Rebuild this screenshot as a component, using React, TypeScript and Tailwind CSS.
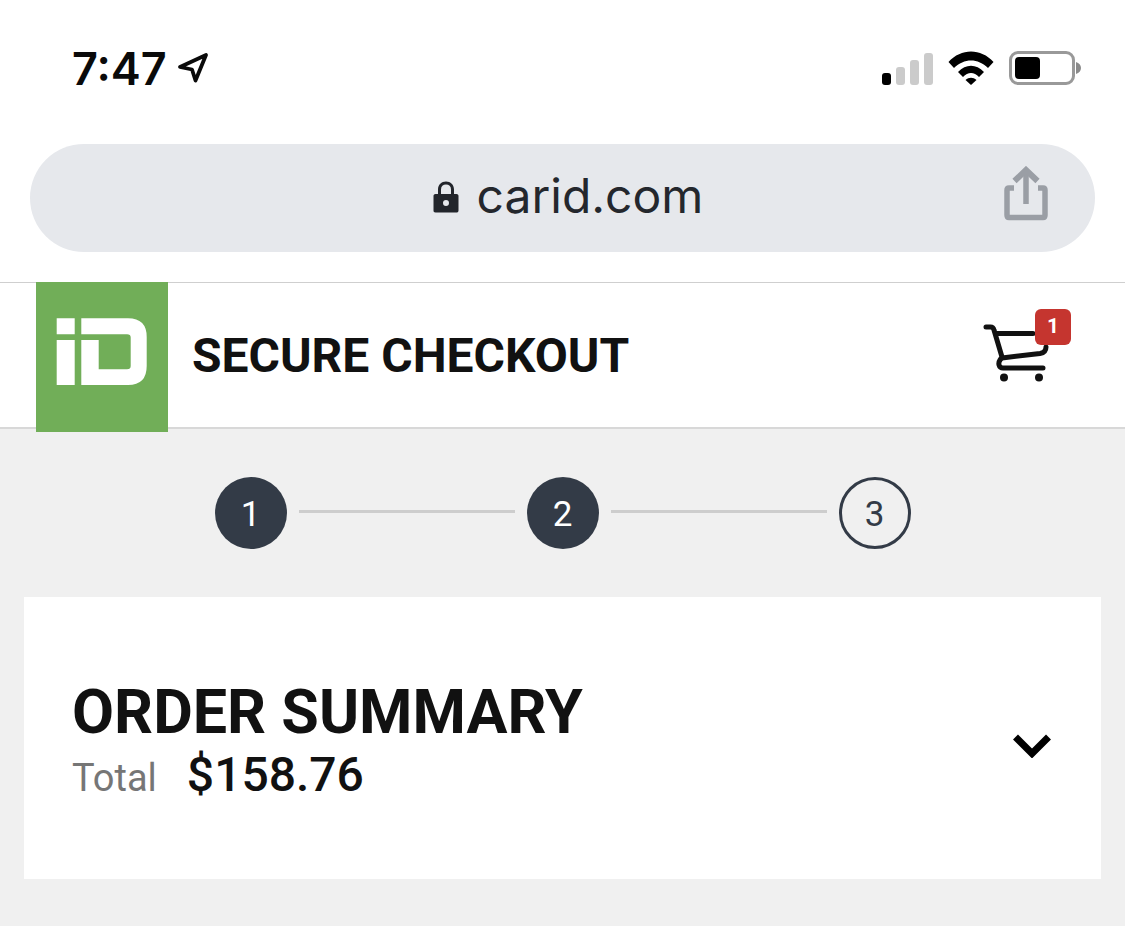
import React from "react";

const roboto = "font-['Roboto',sans-serif]";
const inter = "font-['Inter',sans-serif]";

function Step({ n, filled }: { n: number; filled?: boolean }) {
  return (
    <div
      className={`w-[72px] h-[72px] rounded-full flex items-center justify-center pt-[4px] text-[35px] font-normal ${roboto} ${
        filled ? "bg-[#333b47] text-white" : "border-[3px] border-[#333b47] text-[#333b47]"
      }`}
    >
      {n}
    </div>
  );
}

export default function App() {
  return (
    <div className="w-[1125px] h-[926px] bg-[#f0f0f0] overflow-hidden flex flex-col">
      {/* Status bar */}
      <div className="bg-white h-[144px] shrink-0 flex justify-between items-start pl-[72px] pr-[44px] pt-[43px]">
        <div className="flex items-center">
          <span className={`text-[45px] leading-[52px] font-semibold text-[#0a0a0a] ${inter}`}>7:47</span>
          <svg width="32" height="32" viewBox="0 0 32 32" className="ml-[10px] mt-[-2px]" fill="none" stroke="#0a0a0a" strokeWidth="3.800" strokeLinejoin="round">
            <path d="M3 15 L29 3 L18.500 28.500 L15 17.500 Z" />
          </svg>
        </div>
        <div className="flex items-center gap-[15px] mt-[8px]">
          <div className="flex items-end gap-[5px] h-[34px]">
            <div className="w-[9px] h-[12px] rounded-[3px] bg-black" />
            <div className="w-[9px] h-[18px] rounded-[3px] bg-[#cbcbcb]" />
            <div className="w-[9px] h-[25px] rounded-[3px] bg-[#cbcbcb]" />
            <div className="w-[9px] h-[32px] rounded-[3px] bg-[#cbcbcb]" />
          </div>
          <svg width="46" height="34" viewBox="0 0 46 34" fill="#000">
            <path d="M0.500 11 C13 -3 33 -3 45.500 11 L40 17 C30 7 16 7 6 17 Z" />
            <path d="M10 21 C18 12.500 28 12.500 36 21 L31 26 C26 20.500 20 20.500 15 26 Z" />
            <path d="M17.500 29 C21 26 25 26 28.500 29 L23 34 Z" />
          </svg>
          <div className="flex items-center">
            <div className="w-[66px] h-[34px] rounded-[9px] border-[3px] border-[#999] p-[3px]">
              <div className="w-[25px] h-full rounded-[4px] bg-black" />
            </div>
            <svg width="5" height="12" viewBox="0 0 5 12" className="ml-[1px]" fill="#8a8a8a">
              <path d="M0 0 C3 1 5 3 5 6 C5 9 3 11 0 12 Z" />
            </svg>
          </div>
        </div>
      </div>

      {/* URL bar */}
      <div className="bg-white h-[138px] shrink-0 px-[30px]">
        <div className="relative h-[108px] rounded-[54px] bg-[#e6e8ec] flex items-center justify-center pl-[11px]">
          <svg width="26" height="32" viewBox="0 0 26 32" className="mr-[18px] mt-[-3px]">
            <path fillRule="evenodd" fill="#22252b" d="M5 13 V8.500 C5 3.500 8.500 0.500 13 0.500 C17.500 0.500 21 3.500 21 8.500 V13 H23.500 C25 13 25.500 14 25.500 15 V29.500 C25.500 31 24.500 31.500 23.500 31.500 H2.500 C1 31.500 0.500 30.500 0.500 29.500 V15 C0.500 14 1 13 2.500 13 Z M8 13 H18 V8.500 C18 5.200 16 3.500 13 3.500 C10 3.500 8 5.200 8 8.500 Z M13 19 A3 3 0 1 0 13 25 A3 3 0 1 0 13 19 Z" />
          </svg>
          <span className={`text-[48px] leading-[56px] mt-[-5px] text-[#24272d] ${inter}`}>carid.com</span>
          <svg width="44" height="56" viewBox="0 0 44 56" className="absolute right-[47px] top-[22px]" fill="none" stroke="#9a9ea5" strokeWidth="5.500">
            <path d="M10 22 H5 C3 22 3 23 3 24 V49 C3 51 4 51.500 5 51.500 H39 C40 51.500 41 51 41 49 V24 C41 23 41 22 39 22 H34" strokeLinejoin="round" />
            <path d="M22 38 V4" />
            <path d="M10.500 15 L22 4 L33.500 15" strokeWidth="6" />
          </svg>
        </div>
      </div>

      {/* Header */}
      <div className="bg-white h-[147px] shrink-0 border-t border-[#cfcfcf] border-b-2 border-b-[#d8d8d8] flex items-start">
        <svg width="132" height="150" viewBox="0 0 132 150" className="ml-[36px] mt-[-1px] mb-[-6px] relative shrink-0">
          <rect width="132" height="150" fill="#71ae58" />
          <path fill="#fff" d="M20.700 36.300 H38.700 V52.300 H20.700 Z M20.700 58 H38.700 V103 H20.700 Z" />
          <path fill="#fff" d="M45.300 36.300 H92 Q110.700 36.300 110.700 55 V84 Q110.700 103 92 103 H45.300 V58 H62.700 V87.300 H91 Q94.700 87.300 94.700 84 V55.500 Q94.700 52.300 91 52.300 H45.300 Z" />
        </svg>
        <div className={`ml-[24px] mt-[46px] text-[48px] leading-[54px] font-bold text-[#111] ${roboto}`}>SECURE CHECKOUT</div>
        <div className="relative ml-auto mr-[54px] w-[90px] h-[80px] mt-[25px]">
          <svg width="70" height="62" viewBox="0 0 70 62" className="absolute left-[2px] top-[16px]" fill="none" stroke="#111" strokeWidth="5" strokeLinecap="round" strokeLinejoin="round">
            <path d="M3 3 H7.500 C9.500 3 10.500 4 11 6 L19 33 L17 36 C15 39 15.500 44 20 44 H60" />
            <path d="M14 9.500 H50" />
            <path d="M19 34 L57 29.500 C60 29 63 28 63 23" />
            <circle cx="21" cy="53.500" r="4" fill="#111" stroke="none" />
            <circle cx="56" cy="53.500" r="4" fill="#111" stroke="none" />
          </svg>
          <div className={`absolute left-[54px] top-[1px] w-[36px] h-[36px] rounded-[6px] bg-[#c5352f] text-white text-[21px] font-bold flex items-center justify-center ${roboto}`}>1</div>
        </div>
      </div>

      {/* Steps */}
      <div className="h-[168px] shrink-0 flex items-center justify-center gap-[12px]">
        <Step n={1} filled />
        <div className="w-[216px] h-[3px] mt-[-4px] bg-[#cdcdcd]" />
        <Step n={2} filled />
        <div className="w-[216px] h-[3px] mt-[-4px] bg-[#cdcdcd]" />
        <Step n={3} />
      </div>

      {/* Order summary */}
      <div className="mx-[24px] h-[282px] shrink-0 bg-white flex items-center justify-between pl-[48px] pr-[50px]">
        <div className={`${roboto} mt-[10px]`}>
          <div className="text-[61px] leading-[64px] font-bold text-[#111]">ORDER SUMMARY</div>
          <div className="flex items-baseline mt-[3px]">
            <span className="text-[38px] leading-[56px] text-[#767676]">Total</span>
            <span className="text-[48px] leading-[56px] font-medium text-[#111] ml-[30px]">$158.76</span>
          </div>
        </div>
        <svg width="38" height="24" viewBox="0 0 38 24" fill="none" stroke="#000" strokeWidth="7" className="mt-[16px]">
          <path d="M2.500 3 L19 19.500 L35.500 3" />
        </svg>
      </div>
    </div>
  );
}
